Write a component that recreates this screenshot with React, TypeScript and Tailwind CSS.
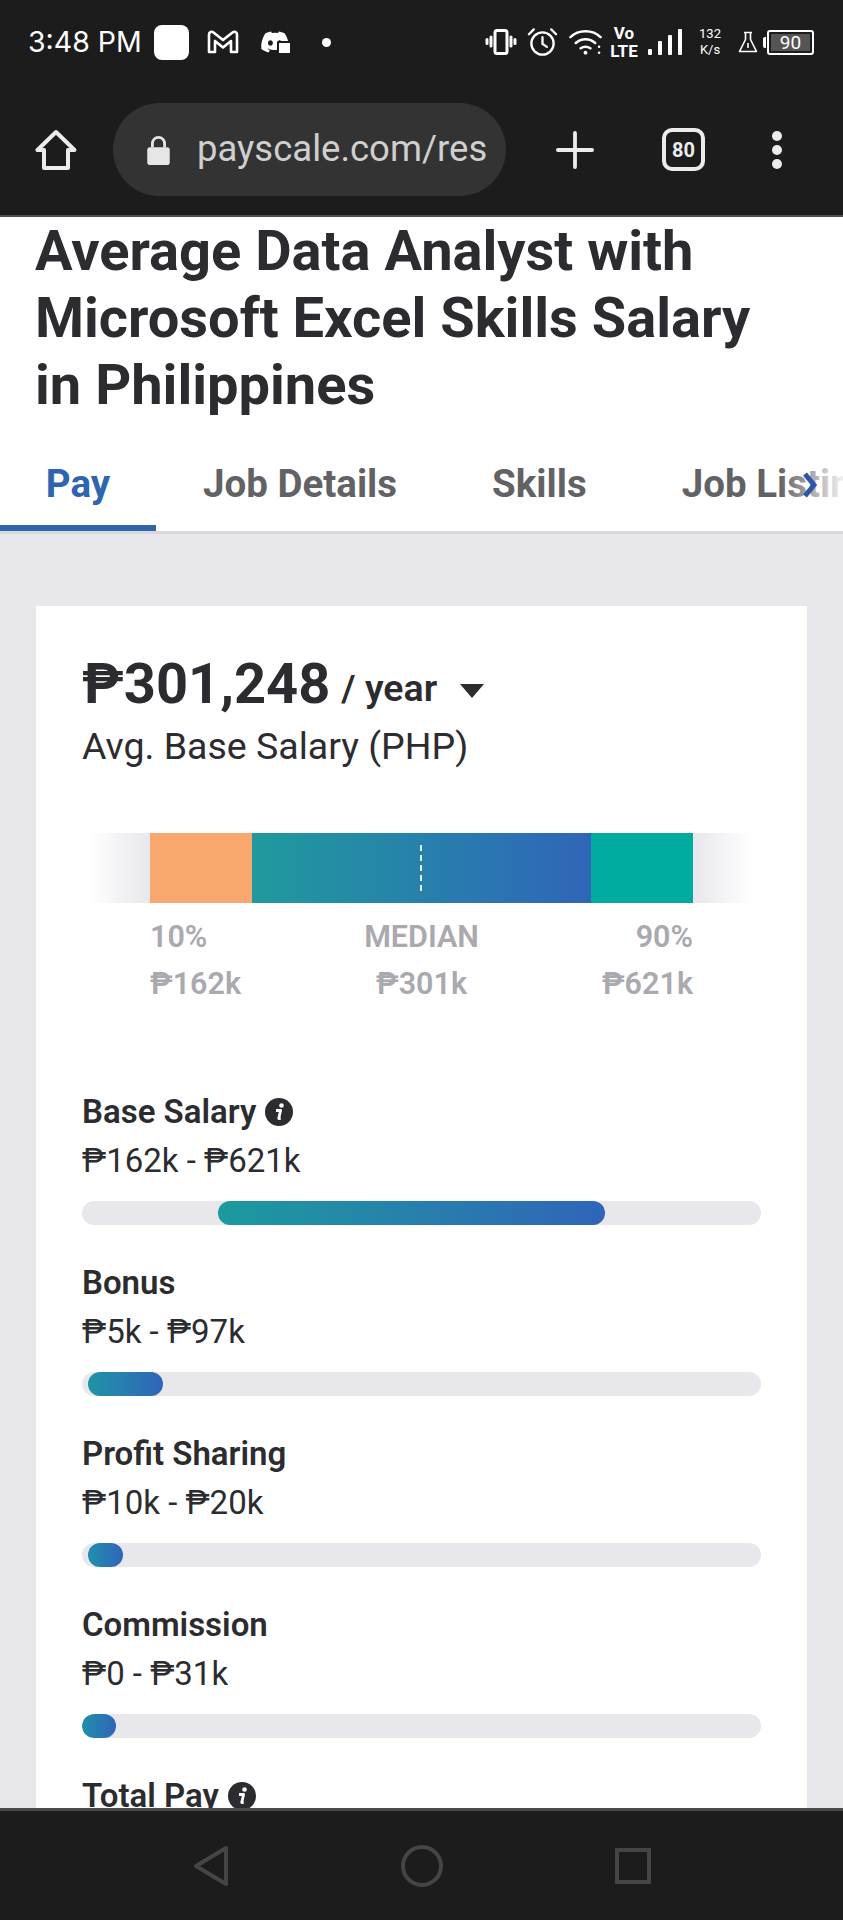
import { FaDiscord } from "react-icons/fa";

const rows = [
  { label: "Base Salary", value: "₱162k - ₱621k", fill: "ml-[136px] w-[387px] from-[#1c9a9d]", info: true },
  { label: "Bonus", value: "₱5k - ₱97k", fill: "ml-[6px] w-[75px] from-[#1f93a6]" },
  { label: "Profit Sharing", value: "₱10k - ₱20k", fill: "ml-[6px] w-[35px] from-[#1f8fac]" },
  { label: "Commission", value: "₱0 - ₱31k", fill: "ml-0 w-[34px] from-[#1f8fac]" },
];

const InfoIcon = () => (
  <svg viewBox="0 0 28 28" className="ml-[9px] h-[28px] w-[28px] shrink-0">
    <circle cx="14" cy="14" r="14" fill="#2c2c30" />
    <circle cx="16.5" cy="7.5" r="2.3" fill="#fff" />
    <path d="M11 12.5h4.6L13.7 20.5h2" fill="none" stroke="#fff" strokeWidth="2.8" strokeLinejoin="round" />
  </svg>
);

const StatusBar = () => (
  <div className="flex h-[84px] items-center pt-0 text-white">
    <span className="ml-[28px] w-[126px] text-[28.5px] leading-none font-['Inter',sans-serif]">3:48 PM</span>
    <div className="h-[35px] w-[35px] rounded-[8px] bg-white" />
    <svg viewBox="0 0 32 24" className="ml-[18px] h-[24px] w-[32px]" fill="none" stroke="#fff" strokeWidth="2.6" strokeLinejoin="round">
      <path d="M2 22V4.5C2 2 4.5 1 6.5 2.5L16 10l9.5-7.5C27.500 1 30 2 30 4.500V22h-6V11l-8 6.500L8 11v11z" />
    </svg>
    <div className="relative ml-[21px] h-[26px] w-[32px]">
      <FaDiscord className="h-[26px] w-[30px] text-white" />
      <div className="absolute right-0 bottom-0 h-[14px] w-[15px] rounded-[2px] border-2 border-[#1c1c1c] bg-white" />
    </div>
    <div className="ml-[30px] h-[9px] w-[9px] rounded-full bg-white" />
    <svg viewBox="0 0 32 26" className="ml-[154px] h-[26px] w-[32px]" fill="none" stroke="#fff" strokeWidth="3" strokeLinecap="round">
      <rect x="10" y="1.500" width="12" height="23" rx="2" />
      <path d="M6 8v9M2 10.500v4M26 8v9M30 10.500v4" strokeWidth="3" />
    </svg>
    <svg viewBox="0 0 32 30" className="ml-[10px] h-[30px] w-[31px]" fill="none" stroke="#fff" strokeWidth="2.400" strokeLinecap="round">
      <circle cx="16" cy="16.500" r="11.500" />
      <path d="M16 10v7l4.500 3M2 7l5-5M30 7l-5-5" />
    </svg>
    <svg viewBox="0 0 34 28" className="ml-[11px] h-[28px] w-[33px]" fill="none" stroke="#fff" strokeWidth="2.600" strokeLinecap="round">
      <path d="M1.500 9C10 1 24 1 32.500 9M7 15c6-5 14-5 20 0M12 20.500c3-2 7-2 10 0" />
      <circle cx="17" cy="25" r="2" fill="#fff" stroke="none" />
      <circle cx="31" cy="19" r="1.300" fill="#fff" stroke="none" />
      <circle cx="31" cy="25" r="1.300" fill="#fff" stroke="none" />
    </svg>
    <div className="ml-[8px] flex w-[28px] flex-col items-center text-[17px] leading-[18px] font-bold font-['Roboto',sans-serif]">
      <span>Vo</span>
      <span>LTE</span>
    </div>
    <div className="ml-[10px] flex h-[26px] w-[34px] items-end justify-between">
      <div className="h-[6px] w-[4px] rounded-[1px] bg-white" />
      <div className="h-[14px] w-[4px] rounded-[1px] bg-white" />
      <div className="h-[20px] w-[4px] rounded-[1px] bg-white" />
      <div className="h-[26px] w-[4px] rounded-[1px] bg-white" />
    </div>
    <div className="ml-[15px] flex w-[26px] flex-col items-center text-[13px] leading-[16px] font-['Roboto',sans-serif]">
      <span>132</span>
      <span>K/s</span>
    </div>
    <svg viewBox="0 0 20 22" className="ml-[15px] h-[22px] w-[20px]" fill="none" stroke="#fff" strokeWidth="1.600" strokeLinejoin="round">
      <path d="M6 1.500h8M7.500 1.500v7L1.500 20.500h17l-6-12v-7" />
      <path d="M10 12v5" />
    </svg>
    <div className="ml-[5px] h-[11px] w-[3px] rounded-l-[2px] bg-white" />
    <div className="ml-[1px] flex h-[25px] w-[47px] items-center rounded-[3px] border-2 border-white p-[2px]">
      <div className="flex h-full w-full items-center justify-center bg-[#555555] text-[19px] leading-none font-['Roboto',sans-serif]">90</div>
    </div>
  </div>
);

const Toolbar = () => (
  <div className="flex h-[133px] items-center border-b-2 border-[#4c4c4c] text-[#e6e6e6]">
    <svg viewBox="0 0 42 42" className="ml-[35px] h-[42px] w-[42px]" fill="none" stroke="#ececec" strokeWidth="4" strokeLinejoin="round">
      <path d="M21 3L2.500 21h6.500v18h24V21h6.500z" />
    </svg>
    <div className="ml-[36px] flex h-[93px] w-[393px] items-center overflow-hidden rounded-full bg-[#333333] pl-[33px]">
      <svg viewBox="0 0 26 32" className="h-[30px] w-[25px] shrink-0">
        <path d="M6.500 13V9a6.500 6.500 0 0 1 13 0v4" fill="none" stroke="#e6e6e6" strokeWidth="3" />
        <rect x="1" y="13" width="24" height="19" rx="3" fill="#e6e6e6" />
      </svg>
      <span className="ml-[26px] text-[36.5px] whitespace-nowrap text-[#cfcfcf] font-['Roboto',sans-serif]">payscale.com/res</span>
    </div>
    <svg viewBox="0 0 40 40" className="ml-[50px] h-[38px] w-[38px]" stroke="#ececec" strokeWidth="4" strokeLinecap="round">
      <path d="M20 2v36M2 20h36" />
    </svg>
    <div className="ml-[68px] flex h-[43px] w-[43px] items-center justify-center rounded-[10px] border-[4px] border-[#ececec] text-[20px] font-bold text-[#ececec] font-['Roboto',sans-serif]">80</div>
    <div className="ml-[67px] flex h-[38px] flex-col justify-between">
      <div className="h-[10px] w-[10px] rounded-full bg-[#ececec]" />
      <div className="h-[10px] w-[10px] rounded-full bg-[#ececec]" />
      <div className="h-[10px] w-[10px] rounded-full bg-[#ececec]" />
    </div>
  </div>
);

const Tabs = () => (
  <div className="relative flex h-[101px] overflow-hidden border-b-[3px] border-[#d8d8dd] bg-white text-[38.5px] leading-[50px] font-bold text-[#626266]">
    <div className="flex h-full w-[156px] shrink-0 items-center justify-center border-b-[6px] border-[#2f64ae] pt-[9px] text-[#2f64ae]">Pay</div>
    <div className="ml-[47px] flex h-full shrink-0 items-center pt-[3px]">Job Details</div>
    <div className="ml-[95px] flex h-full shrink-0 items-center pt-[3px]">Skills</div>
    <div className="ml-[95px] flex h-full shrink-0 items-center pt-[3px] whitespace-nowrap">Job Listings</div>
    <div className="absolute top-0 right-0 bottom-[3px] w-[64px] bg-gradient-to-r from-transparent to-white/90" />
    <svg viewBox="0 0 14 26" className="absolute top-[39px] right-[26px] h-[26px] w-[14px]" fill="none" stroke="#2f55a8" strokeWidth="5">
      <path d="M2 2l9 11L2 24" />
    </svg>
  </div>
);

const PayBar = () => (
  <>
    <div className="mt-[65px] flex h-[70px]">
      <div className="w-[68px] bg-gradient-to-r from-white from-10% to-[#e8e8ec]" />
      <div className="w-[102px] bg-[#f8a76f]" />
      <div className="relative w-[340px] bg-gradient-to-r from-[#1f9a9c] to-[#3064b8]">
        <div className="absolute top-[12px] bottom-[12px] left-[168px] border-l-2 border-dashed border-[#dff5f5]" />
      </div>
      <div className="w-[102px] bg-[#00aba0]" />
      <div className="w-[68px] bg-gradient-to-r from-[#e8e8ec] to-white to-90%" />
    </div>
    <div className="mt-[14px] grid grid-cols-3 px-[68px] text-[30.5px] leading-[40px] font-semibold text-[#a9a9af]">
      <span>10%</span>
      <span className="text-center">MEDIAN</span>
      <span className="text-right">90%</span>
      <span className="mt-[7px]">₱162k</span>
      <span className="mt-[7px] text-center">₱301k</span>
      <span className="mt-[7px] text-right">₱621k</span>
    </div>
  </>
);

const PayRow = ({ label, value, fill, info }: { label: string; value: string; fill: string; info?: boolean }) => (
  <div className="pb-[38px]">
    <div className="flex h-[40px] items-center text-[33px] font-semibold text-[#2c2c30]">
      {label}
      {info && <InfoIcon />}
    </div>
    <div className="mt-[9px] text-[33px] leading-[40px] text-[#2c2c30]">{value}</div>
    <div className="mt-[20px] h-[24px] overflow-hidden rounded-full bg-[#e8e8ec]">
      <div className={`h-full rounded-full bg-gradient-to-r to-[#3064b8] ${fill}`} />
    </div>
  </div>
);

export default function App() {
  return (
    <div className="flex h-[1920px] w-[843px] flex-col overflow-hidden bg-[#1c1c1c] font-['Roboto',sans-serif]">
      <StatusBar />
      <Toolbar />
      <main className="min-h-0 flex-1 overflow-hidden bg-[#e8e8ec]">
        <div className="bg-white pt-[1px] pr-[36px] pb-[14px] pl-[35px]">
          <h1 className="text-[56px] leading-[67px] font-bold text-[#2c2c30]">
            Average Data Analyst with Microsoft Excel Skills Salary in Philippines
          </h1>
        </div>
        <Tabs />
        <section className="mx-[36px] mt-[72px] bg-white pt-[45px] pr-[46px] pl-[46px]">
          <div className="flex h-[66px] items-center text-[#2c2c30]">
            <span className="text-[56px] font-bold">₱301,248</span>
            <span className="ml-[11px] pt-[8px] text-[37.5px] font-semibold">/ year</span>
            <div className="mt-[14px] ml-[23px] h-0 w-0 border-x-[12px] border-t-[14px] border-x-transparent border-t-[#2c2c30]" />
          </div>
          <div className="mt-[7px] text-[37.5px] leading-[44px] text-[#2c2c30]">Avg. Base Salary (PHP)</div>
          <PayBar />
          <div className="mt-[88px]">
            {rows.map((row) => (
              <PayRow key={row.label} {...row} />
            ))}
            <div className="flex h-[40px] items-center text-[33px] font-semibold text-[#2c2c30]">
              Total Pay
              <InfoIcon />
            </div>
          </div>
        </section>
      </main>
      <nav className="flex h-[112px] shrink-0 items-center justify-center gap-[172px] border-t-[3px] border-[#4a4a4a] bg-[#1c1c1c]">
        <svg viewBox="0 0 36 42" className="h-[42px] w-[36px]" fill="none" stroke="#454545" strokeWidth="4" strokeLinejoin="round">
          <path d="M33 3L3 21l30 18z" />
        </svg>
        <div className="h-[42px] w-[42px] rounded-full border-[4px] border-[#454545]" />
        <div className="h-[36px] w-[36px] border-[4px] border-[#454545]" />
      </nav>
    </div>
  );
}
